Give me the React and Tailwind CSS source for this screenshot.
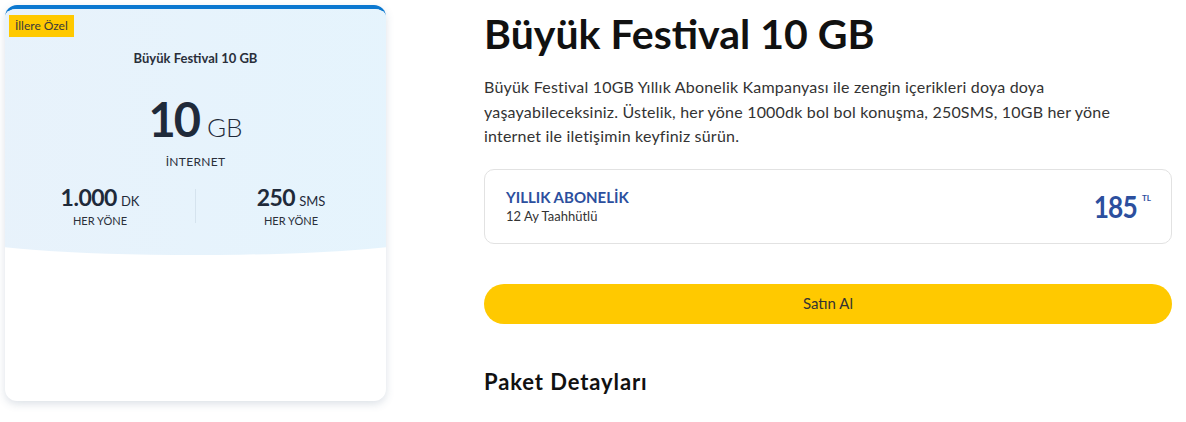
import React from "react";

export default function App() {
  return (
    <div className="w-[1186px] h-[422px] bg-white flex" style={{ fontFamily: "Lato, 'Open Sans', sans-serif" }}>
      <div className="pl-[5px] pt-[5px]">
        <div className="relative w-[381px] h-[396px] rounded-[12px] bg-white overflow-hidden shadow-[0_3px_8px_rgba(60,90,120,0.18)] border-t-4 border-[#0b78d0]">
          <div className="absolute left-[-40px] right-[-40px] top-0 h-[246px] bg-gradient-to-r from-[#e8f2fb] to-[#e5f4fd] rounded-b-[50%_18px]" />
          <div className="relative flex flex-col items-center">
            <div className="self-start ml-[4px] mt-[6px] h-[22px] px-[6px] bg-[#ffc900] text-[12px] text-[#3a3a3a] flex items-center">İllere Özel</div>
            <div className="mt-[12px] text-[13px] font-bold text-[#2a2f3a]">Büyük Festival 10 GB</div>
            <div className="mt-[24px] flex items-baseline gap-[8px] text-[#1f2a3a]">
              <span className="text-[47px] font-bold leading-[52px] tracking-[-2px]">10</span>
              <span className="text-[26px] font-light">GB</span>
            </div>
            <div className="mt-[6px] text-[12px] text-[#2a2f3a] tracking-[0.3px]">İNTERNET</div>
            <div className="mt-[12px] w-full flex items-center">
              <div className="flex-1 flex flex-col items-center">
                <div className="flex items-baseline gap-[4px] text-[#1f2a3a]">
                  <span className="text-[23px] font-bold tracking-[-0.5px] leading-[28px]">1.000</span>
                  <span className="text-[13px]">DK</span>
                </div>
                <div className="text-[11px] text-[#2a2f3a] mt-[2px]">HER YÖNE</div>
              </div>
              <div className="w-px h-[34px] bg-[#d5e3ee]" />
              <div className="flex-1 flex flex-col items-center">
                <div className="flex items-baseline gap-[4px] text-[#1f2a3a]">
                  <span className="text-[23px] font-bold tracking-[-0.5px] leading-[28px]">250</span>
                  <span className="text-[13px]">SMS</span>
                </div>
                <div className="text-[11px] text-[#2a2f3a] mt-[2px]">HER YÖNE</div>
              </div>
            </div>
          </div>
        </div>
      </div>
      <div className="ml-[98px] w-[688px] flex flex-col">
        <h1 className="mt-[10px] text-[41px] font-bold text-[#111] leading-[48px]">Büyük Festival 10 GB</h1>
        <p className="mt-[17px] text-[16px] tracking-[0.2px] leading-[24.5px] text-[#333]">
          Büyük Festival 10GB Yıllık Abonelik Kampanyası ile zengin içerikleri doya doya
          <br />
          yaşayabileceksiniz. Üstelik, her yöne 1000dk bol bol konuşma, 250SMS, 10GB her yöne
          <br />
          internet ile iletişimin keyfiniz sürün.
        </p>
        <div className="mt-[20px] h-[75px] rounded-[10px] border border-[#e2e2e2] flex items-center justify-between pl-[21px] pr-[20px]">
          <div className="flex flex-col">
            <span className="text-[15px] font-bold text-[#2c4f9e] leading-[20px]">YILLIK ABONELİK</span>
            <span className="text-[13px] text-[#333] leading-[18px]">12 Ay Taahhütlü</span>
          </div>
          <div className="flex items-start text-[#2c4f9e]">
            <span className="text-[31px] font-bold leading-[34px] tracking-[-1px] scale-x-[0.85] origin-right">185</span>
            <span className="text-[8px] font-bold ml-[5px] mt-[3px]">TL</span>
          </div>
        </div>
        <button className="mt-[40px] h-[40px] rounded-full bg-[#ffc900] text-[15px] text-[#333]">Satın Al</button>
        <h2 className="mt-[41px] text-[22px] tracking-[0.9px] font-bold text-[#111]">Paket Detayları</h2>
      </div>
    </div>
  );
}
